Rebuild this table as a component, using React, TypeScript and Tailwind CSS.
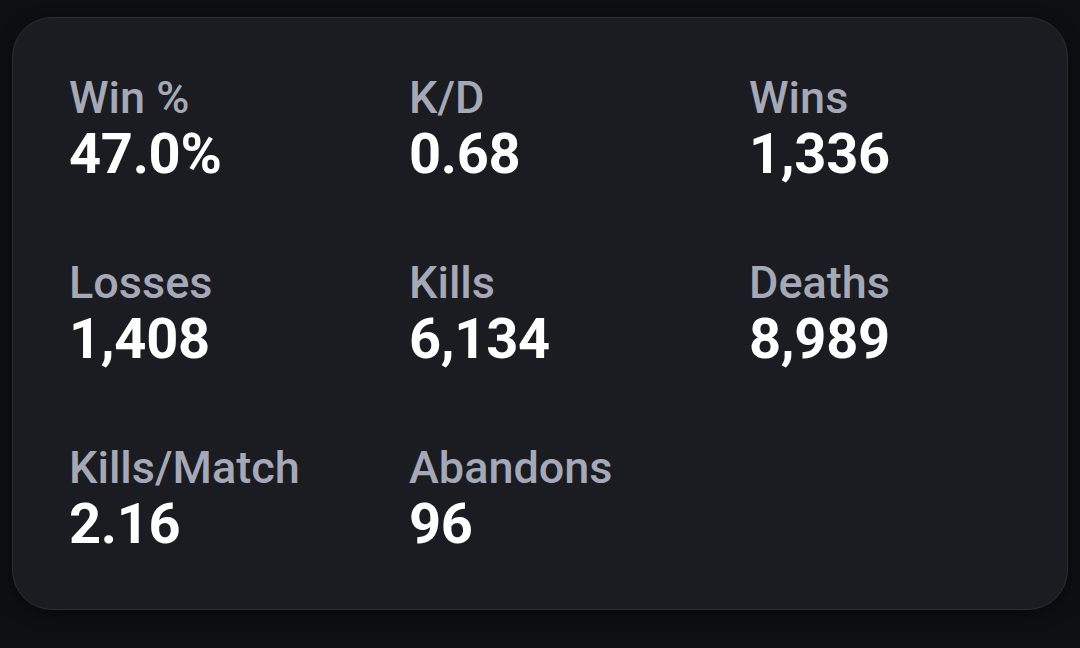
import React from "react";

const stats = [
  { label: "Win %", value: "47.0%" },
  { label: "K/D", value: "0.68" },
  { label: "Wins", value: "1,336" },
  { label: "Losses", value: "1,408" },
  { label: "Kills", value: "6,134" },
  { label: "Deaths", value: "8,989" },
  { label: "Kills/Match", value: "2.16" },
  { label: "Abandons", value: "96" },
];

export default function App() {
  return (
    <div
      className="w-[1080px] h-[648px] bg-[#0e0f13] pt-[17px] pl-[12px] overflow-hidden"
      style={{ fontFamily: "Roboto, 'Liberation Sans', sans-serif" }}
    >
      <div className="w-[1056px] h-[593px] rounded-[40px] border border-[#2b2d33] bg-[#1b1c21] shadow-[0_4px_16px_rgba(0,0,0,0.5)] pl-[56px] pt-[54px]">
        <div className="grid grid-cols-[340px_340px_300px] gap-y-[73px]">
          {stats.map((s) => (
            <div key={s.label} className="flex flex-col">
              <div className="text-[45px] leading-[52px] font-medium text-[#a5a9b7]">{s.label}</div>
              <div className="text-[56px] leading-[60px] font-bold text-white tracking-[-0.3px]">{s.value}</div>
            </div>
          ))}
        </div>
      </div>
    </div>
  );
}
